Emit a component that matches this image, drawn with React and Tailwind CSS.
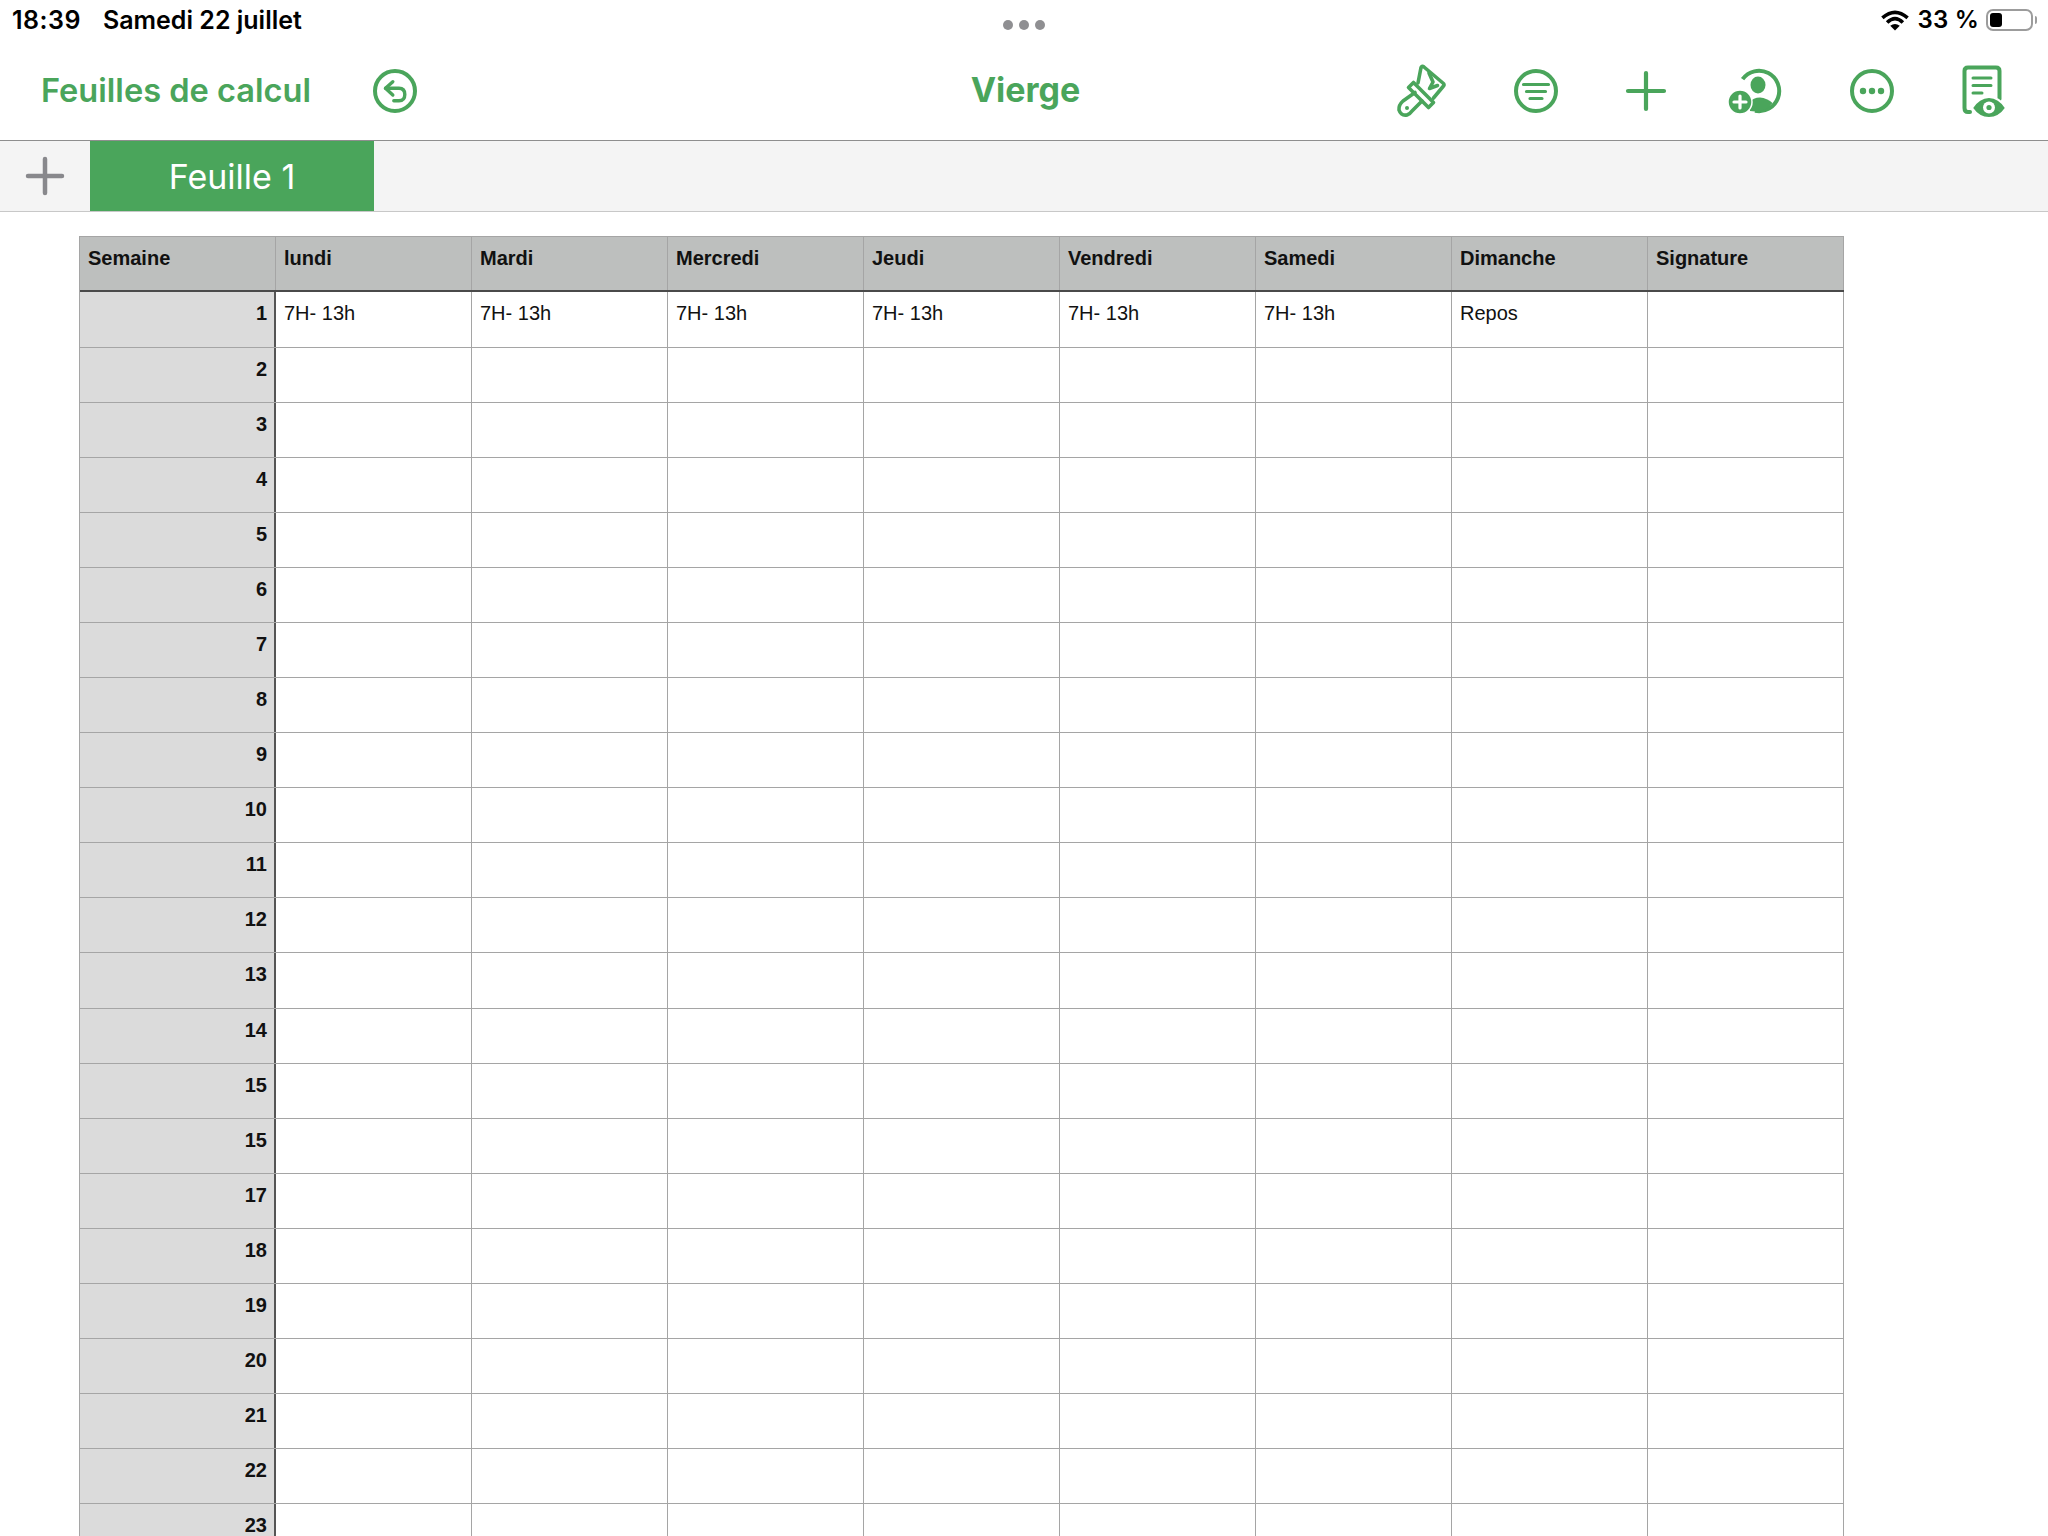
// Numbers spreadsheet on iPad, "Vierge" document
const days = ['lundi', 'Mardi', 'Mercredi', 'Jeudi', 'Vendredi', 'Samedi', 'Dimanche', 'Signature'];
const firstWeek = ['7H- 13h', '7H- 13h', '7H- 13h', '7H- 13h', '7H- 13h', '7H- 13h', 'Repos', ''];
const weeks = [1, 2, 3, 4, 5, 6, 7, 8, 9, 10, 11, 12, 13, 14, 15, 15, 17, 18, 19, 20, 21, 22, 23];

const BrushIcon = () => (
  <svg viewBox="0 0 56 56" className="w-14 h-14 overflow-visible" fill="none" stroke="#4aa55b" strokeWidth="3.6" strokeLinejoin="round" strokeLinecap="round">
    {/* bristles */}
    <path d="M25 20 L28 4.5 Q29 2.5 31 4 L50.5 20.5 Q51.5 22 50.5 23 L40.5 35" />
    <path d="M36 10 L40 19 L36.5 25.5 L44.5 22.5" />
    {/* ferrule */}
    <path d="M20.5 19.5 L40.5 39.5 L35.5 44.5 L15.5 24.5 Z" />
    {/* handle */}
    <path d="M22 29.5 L10 38 Q5.5 42 6 47 Q8 53 14 52 Q17 51 19 48 L29 38" />
    <circle cx="14" cy="45" r="2" fill="#4aa55b" stroke="none" />
  </svg>
);

const FilterIcon = () => (
  <svg viewBox="0 0 56 56" className="w-14 h-14" fill="none" stroke="#4aa55b" strokeWidth="4" strokeLinecap="round">
    <circle cx="28" cy="28" r="20" />
    <path d="M15.5 21.5H40.5M18.5 28.5H37.5M22 35.5H34" strokeWidth="3.2" />
  </svg>
);

const PlusIcon = () => (
  <svg viewBox="0 0 56 56" className="w-14 h-14" fill="none" stroke="#4aa55b" strokeWidth="4.2" strokeLinecap="round">
    <path d="M28 10V46M10 28H46" />
  </svg>
);

const CollabIcon = () => (
  <svg viewBox="0 0 56 56" className="w-14 h-14 overflow-visible">
    <path d="M11.6 16.2 A20.2 20.2 0 1 1 24 47.8" fill="none" stroke="#4aa55b" strokeWidth="4" />
    <ellipse cx="27" cy="22" rx="7.5" ry="8.5" fill="#4aa55b" />
    <path d="M19 48 L19 39 Q22 34.5 29 34.5 Q36 35 41.5 40 Q35 49 24 48.5 Z" fill="#4aa55b" />
    <circle cx="9" cy="39" r="12" fill="#4aa55b" stroke="#fff" strokeWidth="1.5" />
    <path d="M9 33V45M3 39H15" stroke="#fff" strokeWidth="3.2" strokeLinecap="round" />
  </svg>
);

const MoreIcon = () => (
  <svg viewBox="0 0 56 56" className="w-14 h-14" fill="none" stroke="#4aa55b" strokeWidth="4">
    <circle cx="28" cy="28" r="20" />
    <circle cx="19" cy="28" r="3.2" fill="#4aa55b" stroke="none" />
    <circle cx="28" cy="28" r="3.2" fill="#4aa55b" stroke="none" />
    <circle cx="37" cy="28" r="3.2" fill="#4aa55b" stroke="none" />
  </svg>
);

const DocEyeIcon = () => (
  <svg viewBox="0 0 56 56" className="w-14 h-14" fill="none" stroke="#4aa55b" strokeLinecap="round">
    <path d="M16 49 H14 Q10.5 49 10.5 45 V8 Q10.5 4.5 14 4.5 H42 Q45.5 4.5 45.5 8 V36" strokeWidth="4" />
    <path d="M19 15H37M19 22.5H37M19 30H28" strokeWidth="3" />
    <path d="M18 45 Q25 34 35 34 Q45 34 52 45 Q45 55 35 55 Q25 55 18 45 Z" fill="#4aa55b" stroke="#fff" strokeWidth="2" />
    <circle cx="35" cy="44.5" r="6" fill="#fff" stroke="none" />
    <circle cx="35" cy="44.5" r="2.6" fill="#4aa55b" stroke="none" />
  </svg>
);

const UndoIcon = () => (
  <svg viewBox="0 0 56 56" className="w-14 h-14" fill="none" stroke="#4aa55b" strokeLinecap="round" strokeLinejoin="round">
    <circle cx="28" cy="28" r="20" strokeWidth="4" />
    <path d="M25.8 18.7 L18.5 25.3 L25.8 32" strokeWidth="3.4" />
    <path d="M18.5 25.3 H32 Q37.8 25.3 37.8 31.5 Q37.8 37.7 32 37.7 H26.8" strokeWidth="3.4" />
  </svg>
);

const WifiIcon = () => (
  <svg viewBox="0 0 28 20" className="w-[30px] h-[21px]" fill="none" stroke="#000" strokeWidth="3.4">
    <path d="M2 7.5 Q14 -3 26 7.5" />
    <path d="M6.5 12 Q14 4.5 21.5 12" />
    <path d="M14 19.5 L9.5 15 Q14 11.5 18.5 15 Z" fill="#000" stroke="none" />
  </svg>
);

const toolbarIcons = [
  { Icon: BrushIcon, gap: '' },
  { Icon: FilterIcon, gap: 'ml-[59px]' },
  { Icon: PlusIcon, gap: 'ml-[54px]' },
  { Icon: CollabIcon, gap: 'ml-[57px]' },
  { Icon: MoreIcon, gap: 'ml-[57px]' },
  { Icon: DocEyeIcon, gap: 'ml-[54px]' },
];

const StatusBar = () => (
  <div className="h-[42px] flex items-start font-['Inter',sans-serif] text-black">
    <div className="flex-1 flex pl-[12px] pt-[5px] text-[25px] leading-[30px] font-semibold">
      <span className="tracking-[0.5px]">18:39</span>
      <span className="ml-[22px]">Samedi 22 juillet</span>
    </div>
    <div className="ml-[2px] flex gap-[6px] pt-[20px]">
      <span className="w-[10px] h-[10px] rounded-full bg-[#8f8f92]"></span>
      <span className="w-[10px] h-[10px] rounded-full bg-[#8f8f92]"></span>
      <span className="w-[10px] h-[10px] rounded-full bg-[#8f8f92]"></span>
    </div>
    <div className="flex-1 h-[40px] flex justify-end items-center pr-[15px] text-[24px] leading-[24px] font-semibold">
      <WifiIcon />
      <span className="ml-[8px] tracking-[0.2px]">33 %</span>
      <div className="ml-[7px] w-[47px] h-[22px] rounded-[7px] border-2 border-[#9c9c9c] p-[2px] relative">
        <div className="w-[12px] h-full rounded-[3px] bg-black"></div>
        <span className="absolute -right-[6px] top-[5px] w-[2px] h-[8px] rounded-r bg-[#9c9c9c]"></span>
      </div>
    </div>
  </div>
);

const NavBar = () => (
  <div className="h-[98px] flex items-center font-['Inter',sans-serif] text-[#4aa55b]">
    <div className="flex-1 flex items-center pl-[41px]">
      <span className="pb-[2px] text-[32.6px] leading-none font-semibold">Feuilles de calcul</span>
      <span className="ml-[56px]"><UndoIcon /></span>
    </div>
    <span className="pb-[2px] text-[34px] leading-none font-bold">Vierge</span>
    <div className="flex-1 flex items-center justify-end pr-[38px]">
      {toolbarIcons.map(({ Icon, gap }, i) => (
        <span key={i} className={gap}><Icon /></span>
      ))}
    </div>
  </div>
);

const TabBar = () => (
  <div className="h-[71px] flex bg-[#f4f4f4] border-b border-[#c8c8c8]">
    <div className="w-[90px] flex items-center justify-center">
      <svg viewBox="0 0 40 40" className="w-10 h-10" fill="none" stroke="#88888c" strokeWidth="4.5" strokeLinecap="round">
        <path d="M20 3V37M3 20H37" />
      </svg>
    </div>
    <div className="w-[284px] flex items-center justify-center bg-[#4aa55b] text-white font-['Inter',sans-serif] text-[34px]">
      Feuille 1
    </div>
  </div>
);

const Sheet = () => (
  <div className="ml-[79px] mt-[24px] w-[1765px] border-l border-t border-[#a5a5a5] font-['Liberation_Sans',sans-serif] text-[20px] leading-[23px] text-[#111]">
    <div className="flex h-[55px] bg-[#bdbfbe] font-bold border-b-2 border-[#4a4a4a]">
      <div className="w-[196px] pl-[8px] pt-[10px] border-r border-[#a5a5a5]">Semaine</div>
      {days.map((day) => (
        <div key={day} className="w-[196px] pl-[8px] pt-[10px] border-r border-[#a5a5a5]">{day}</div>
      ))}
    </div>
    {weeks.map((week, i) => (
      <div key={i} className={`flex border-b border-[#a5a5a5] ${i === 0 || i === 12 ? 'h-[56px]' : 'h-[55px]'}`}>
        <div className="w-[196px] pr-[7px] pt-[10px] text-right font-bold bg-[#dbdbdb] border-r-2 border-[#555]">{week}</div>
        {days.map((day, j) => (
          <div key={day} className="w-[196px] pl-[8px] pt-[10px] border-r border-[#a5a5a5]">
            {i === 0 ? firstWeek[j] : ''}
          </div>
        ))}
      </div>
    ))}
  </div>
);

const App = () => {
  return (
    <div className="w-[2048px] h-[1536px] overflow-hidden bg-white">
      <div className="h-[141px] border-b border-[#8e8e8e]">
        <StatusBar />
        <NavBar />
      </div>
      <TabBar />
      <Sheet />
    </div>
  );
};

export default App;
